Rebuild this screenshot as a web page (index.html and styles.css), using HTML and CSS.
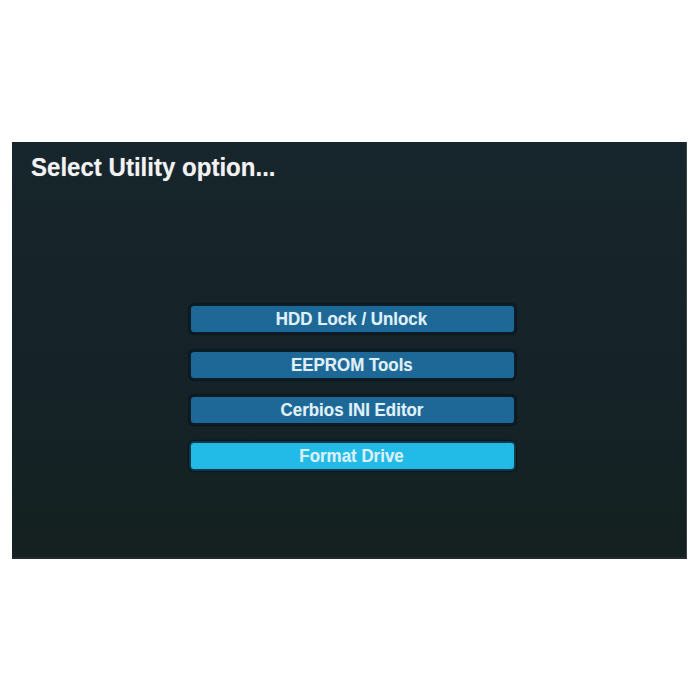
FILE: index.html
```html
<!DOCTYPE html>
<html>
<head>
<meta charset="utf-8">
<link rel="stylesheet" href="styles.css">
</head>
<body>
<div class="screen">
  <h1 class="title"><span class="narrow">Select Utility option...</span></h1>
  <div class="menu">
    <div class="item"><span class="label">HDD Lock / Unlock</span></div>
    <div class="item"><span class="label">EEPROM Tools</span></div>
    <div class="item"><span class="label">Cerbios INI Editor</span></div>
    <div class="item active"><span class="label">Format Drive</span></div>
  </div>
</div>
</body>
</html>
```

FILE: styles.css
```css
html, body {
  margin: 0;
  padding: 0;
  background: #ffffff;
}
body {
  width: 700px;
  height: 700px;
  font-family: "Liberation Sans", Arial, sans-serif;
}
.screen {
  margin: 142px 0 0 12px;
  width: 675px;
  height: 417px;
  box-sizing: border-box;
  background: linear-gradient(180deg, #17252c 0%, #152328 60%, #14211f 100%);
  border-right: 1px solid #3a4448;
  border-bottom: 2px solid #1f2c2e;
  padding: 10px 0 0 19px;
}
.title {
  margin: 0;
  font-size: 26px;
  line-height: 30px;
  font-weight: bold;
  color: #f2f2f2;
  text-shadow: 0 0 1px rgba(255,255,255,0.4);
}
.narrow {
  display: inline-block;
  transform: scaleX(0.925);
  transform-origin: left center;
  white-space: nowrap;
}
.menu {
  margin-top: 122px;
  display: flex;
  flex-direction: column;
  align-items: center;
  gap: 15.7px;
  padding-left: 6px;
  margin-left: -19px;
}
.item {
  width: 327px;
  height: 30px;
  box-sizing: border-box;
  background: #1d6897;
  border: 2px solid #0a1d28;
  border-radius: 5px;
  box-shadow: 0 0 1px 1px rgba(5,15,20,0.6);
  color: #dff0f8;
  font-size: 18px;
  font-weight: bold;
  line-height: 26px;
  text-align: center;
  text-shadow: 0 0 1px rgba(255,255,255,0.3);
}
.label {
  display: inline-block;
  transform: scaleX(0.94);
  white-space: nowrap;
}
.item.active {
  background: #22bae7;
  border-color: #10394a;
  color: #d8f0fa;
}
```
